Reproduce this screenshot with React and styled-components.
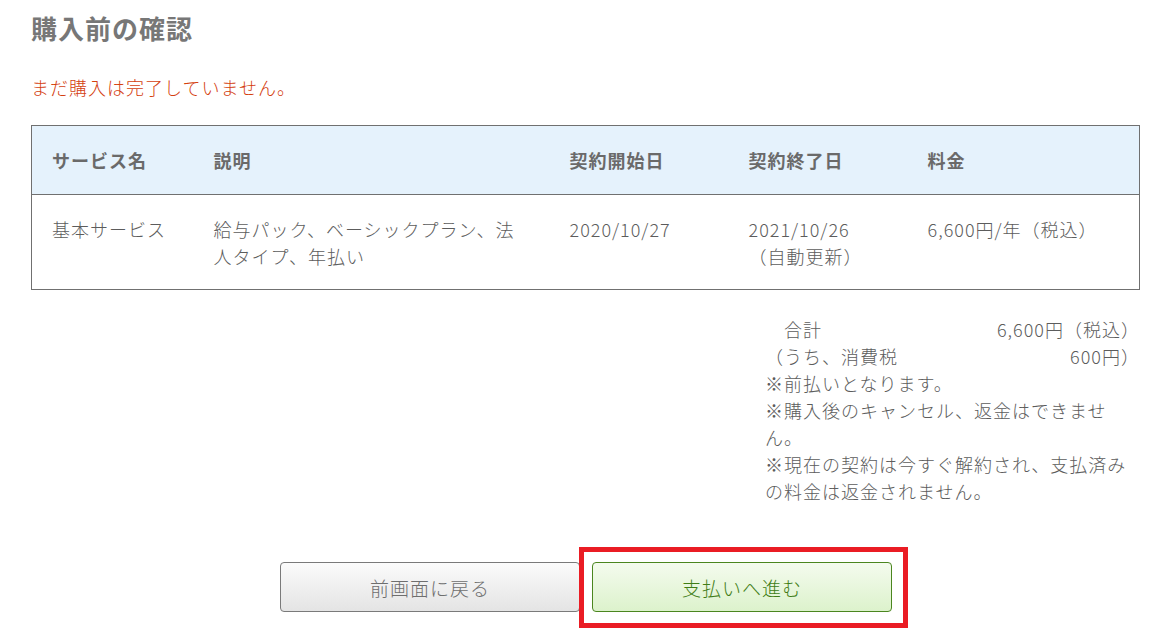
import React from "react";
import styled, { createGlobalStyle } from "styled-components";

const GlobalStyle = createGlobalStyle`
  html, body {
    margin: 0;
    padding: 0;
    background: #fff;
  }
  body {
    font-family: "Noto Sans CJK JP", "Noto Sans", sans-serif;
    font-weight: 300;
    color: #5c5c5c;
    font-size: 18px;
    line-height: 27px;
    letter-spacing: 1px;
  }
`;

const columns = [162, 356, 179, 179, 232];

const App = () => {
  return (
    <Page>
      <GlobalStyle />
      <Title>購入前の確認</Title>
      <Notice>まだ購入は完了していません。</Notice>

      <Table>
        <colgroup>
          {columns.map((w, i) => (
            <col key={i} style={{ width: w }} />
          ))}
        </colgroup>
        <thead>
          <tr>
            <Th>サービス名</Th>
            <Th>説明</Th>
            <Th>契約開始日</Th>
            <Th>契約終了日</Th>
            <Th>料金</Th>
          </tr>
        </thead>
        <tbody>
          <tr>
            <Td>基本サービス</Td>
            <Td>給与パック、ベーシックプラン、法人タイプ、年払い</Td>
            <Td>2020/10/27</Td>
            <Td>
              2021/10/26
              <br />
              （自動更新）
            </Td>
            <Td>6,600円/年（税込）</Td>
          </tr>
        </tbody>
      </Table>

      <Summary>
        <SummaryBox>
          <SumRow>
            <span>　合計</span>
            <span>6,600円（税込）</span>
          </SumRow>
          <SumRow>
            <span>（うち、消費税</span>
            <span>600円）</span>
          </SumRow>
          <Note>※前払いとなります。</Note>
          <Note>※購入後のキャンセル、返金はできません。</Note>
          <Note>※現在の契約は今すぐ解約され、支払済みの料金は返金されません。</Note>
        </SummaryBox>
      </Summary>

      <Actions>
        <Button>前画面に戻る</Button>
        <Highlight>
          <Button primary>支払いへ進む</Button>
        </Highlight>
      </Actions>
    </Page>
  );
};

const Page = styled.div`
  min-height: 633px;
  box-sizing: border-box;
  padding: 8px 32px 24px 31px;
`;

const Title = styled.h1`
  margin: 0;
  font-size: 26px;
  line-height: 39px;
  font-weight: 700;
  color: #777;
  letter-spacing: 1px;
`;

const Notice = styled.p`
  margin: 27px 0 0;
  color: #d4400f;
`;

const Table = styled.table`
  width: 100%;
  margin-top: 24px;
  border-collapse: collapse;
  table-layout: fixed;
  border: 1px solid #707070;
  thead tr {
    background: #e5f2fc;
    border-bottom: 1px solid #707070;
  }
`;

const Th = styled.th`
  padding: 21px 20px 20px 20px;
  text-align: left;
  font-weight: 700;
  color: #6a6a6a;
  vertical-align: top;
`;

const Td = styled.td`
  padding: 21px 20px 19px 20px;
  vertical-align: top;
`;

const Summary = styled.div`
  display: flex;
  justify-content: flex-end;
  margin-top: 26px;
`;

const SummaryBox = styled.div`
  width: 375px;
`;

const SumRow = styled.div`
  display: flex;
  justify-content: space-between;
`;

const Note = styled.div``;

const Actions = styled.div`
  display: flex;
  justify-content: center;
  gap: 12px;
  margin-top: 57px;
  margin-left: -31px;
  margin-right: -32px;
`;

const Button = styled.button`
  width: 300px;
  height: 50px;
  box-sizing: border-box;
  border-radius: 4px;
  font-family: "Noto Sans CJK JP", "Noto Sans", sans-serif;
  font-weight: 300;
  font-size: 19px;
  letter-spacing: 1px;
  cursor: pointer;
  border: 1px solid ${(p) => (p.primary ? "#4b861f" : "#7a7a7a")};
  color: ${(p) => (p.primary ? "#3f7d16" : "#6e6e6e")};
  background: ${(p) =>
    p.primary
      ? "linear-gradient(#f4fbee, #dcf2cc)"
      : "linear-gradient(#fbfbfb, #e4e4e4)"};
`;

const Highlight = styled.div`
  position: relative;
  &::after {
    content: "";
    position: absolute;
    top: -15px;
    bottom: -16px;
    left: -13px;
    right: -16px;
    border: 5px solid #ea1c24;
    pointer-events: none;
  }
`;

export default App;
